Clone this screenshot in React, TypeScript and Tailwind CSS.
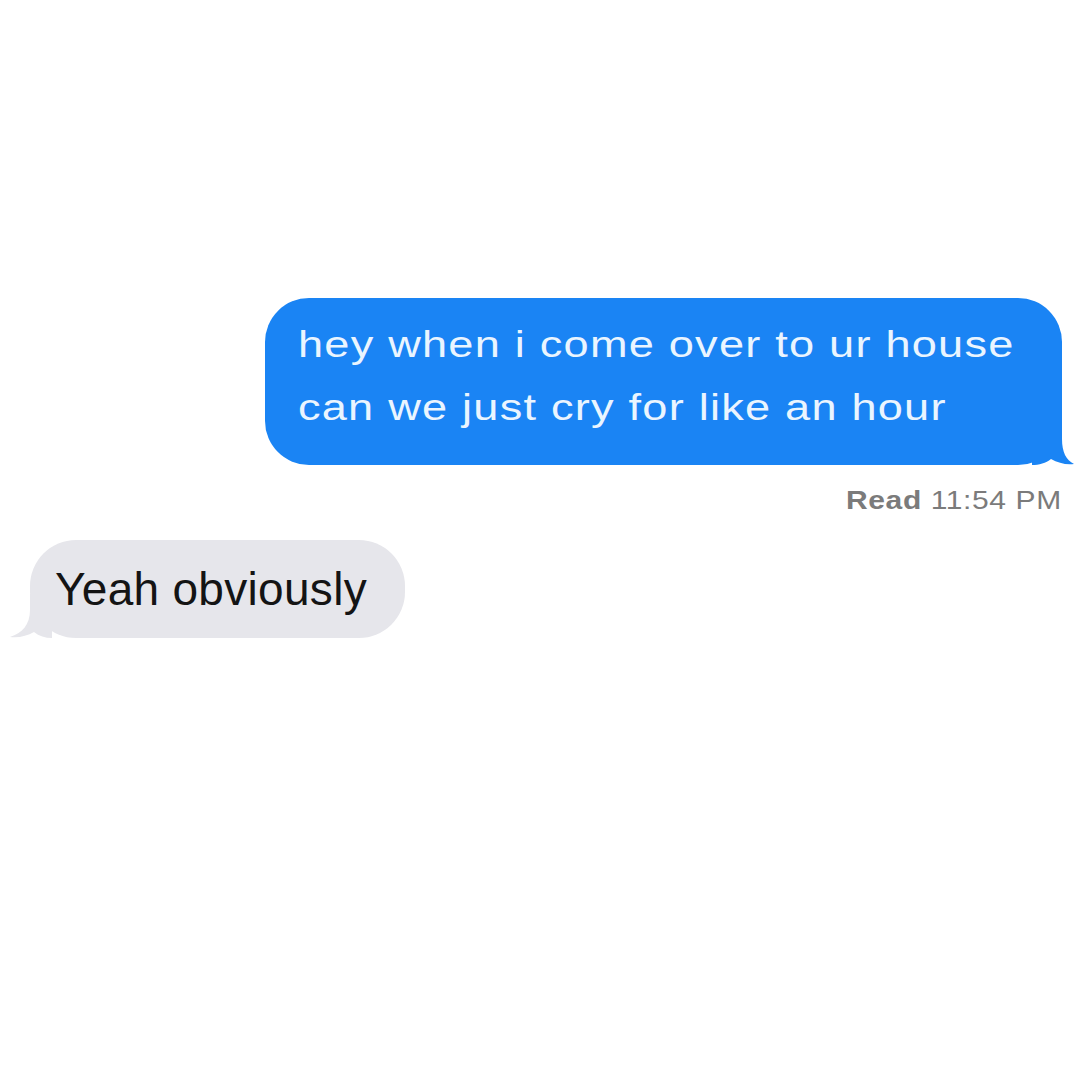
import React from "react";

const BlueTail: React.FC = () => (
  <svg
    className="absolute right-[-12px] bottom-0"
    width="42"
    height="44"
    viewBox="0 0 42 44"
  >
    <path
      d="M0 0 H30 V18 C30 31 34 39 42 43 C34 44 26 42 19 38 C14 42 7 44 0 44 Z"
      fill="#1a84f4"
    />
  </svg>
);

const GrayTail: React.FC = () => (
  <svg
    className="absolute left-[-20px] bottom-0"
    width="42"
    height="44"
    viewBox="0 0 42 44"
  >
    <path
      d="M42 0 H20 V16 C20 31 12 39 0 43 C9 44 17 42 24 38 C29 42 35 44 42 44 Z"
      fill="#e6e6eb"
    />
  </svg>
);

const App: React.FC = () => {
  return (
    <div
      className="w-[1080px] h-[1080px] overflow-hidden bg-white flex flex-col pt-[298px]"
      style={{ fontFamily: '"Liberation Sans", Arial, sans-serif' }}
    >
      <div className="self-end mr-[18px] w-[797px] relative rounded-[44px] bg-[#1a84f4] pl-[33px] pt-[15px] pb-[26px]">
        <p className="w-max origin-left scale-x-[1.22] whitespace-nowrap text-[37px] leading-[63px] tracking-[1px] text-[#eaf5ff]">
          hey when i come over to ur house
          <br />
          can we just cry for like an hour
        </p>
        <BlueTail />
      </div>

      <p className="self-end mr-[18px] mt-[20px] origin-right scale-x-[1.2] whitespace-nowrap text-[25px] leading-[30px] tracking-[0.5px] text-[#7b7b7b]">
        <span className="font-bold">Read</span> 11:54 PM
      </p>

      <div className="ml-[30px] mt-[25px] w-[375px] relative rounded-[46px] bg-[#e6e6eb] pl-[25px] pt-[22px] pb-[21px]">
        <p className="whitespace-nowrap text-[46px] leading-[55px] tracking-[0.3px] text-[#141414]">
          Yeah obviously
        </p>
        <GrayTail />
      </div>
    </div>
  );
};

export default App;
